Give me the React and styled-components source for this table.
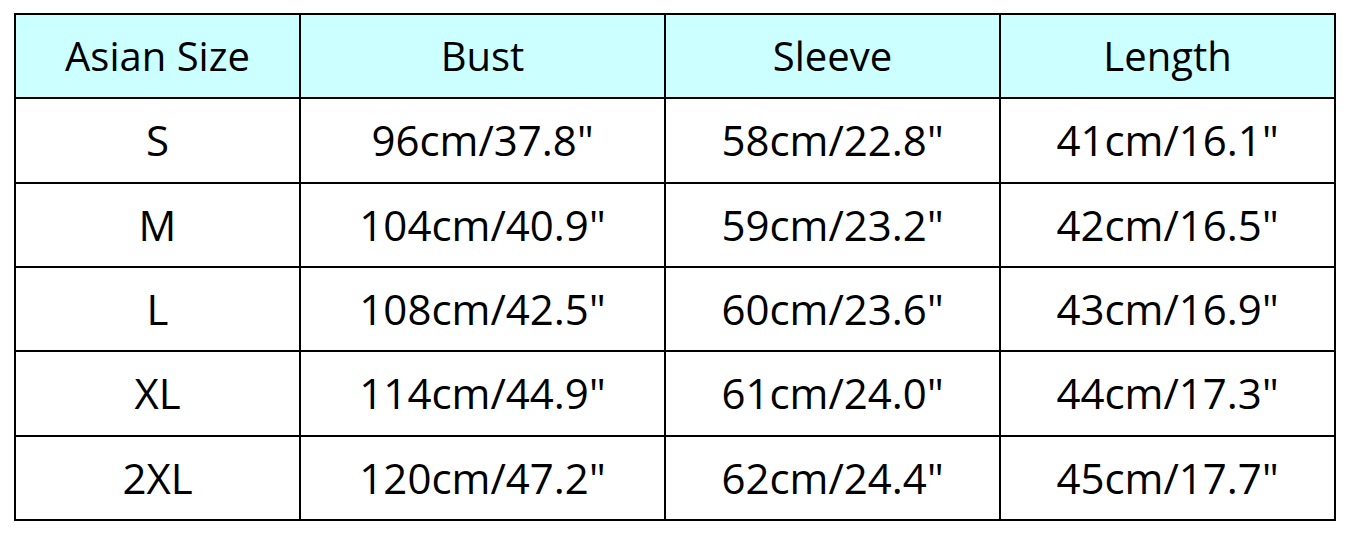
import React from "react";
import styled, { createGlobalStyle } from "styled-components";

const GlobalStyle = createGlobalStyle`
  html, body {
    margin: 0;
    padding: 0;
    background: #ffffff;
  }
`;

const Page = styled.div`
  padding: 13px 0 0 14px;
`;

const Grid = styled.div`
  display: grid;
  grid-template-columns: 283px 363px 333px 333px;
  grid-template-rows: repeat(6, 82.33px);
  gap: 2px;
  width: max-content;
  background: #000000;
  border: 2px solid #000000;
`;

const Cell = styled.div`
  display: flex;
  align-items: center;
  justify-content: center;
  background: ${(p) => (p.$head ? "#ccffff" : "#ffffff")};
  color: #000000;
  font-family: "Open Sans", "Liberation Sans", sans-serif;
  font-size: ${(p) => (p.$head ? "40px" : "42px")};
  line-height: 1;
`;

const head = ["Asian Size", "Bust", "Sleeve", "Length"];
const rows = [
  ["S", '96cm/37.8"', '58cm/22.8"', '41cm/16.1"'],
  ["M", '104cm/40.9"', '59cm/23.2"', '42cm/16.5"'],
  ["L", '108cm/42.5"', '60cm/23.6"', '43cm/16.9"'],
  ["XL", '114cm/44.9"', '61cm/24.0"', '44cm/17.3"'],
  ["2XL", '120cm/47.2"', '62cm/24.4"', '45cm/17.7"'],
];

const App = () => {
  return (
    <Page>
      <GlobalStyle />
      <Grid>
        {head.map((h) => (
          <Cell $head key={h}>{h}</Cell>
        ))}
        {rows.map((r) =>
          r.map((v, i) => <Cell key={r[0] + i}>{v}</Cell>)
        )}
      </Grid>
    </Page>
  );
};

export default App;
